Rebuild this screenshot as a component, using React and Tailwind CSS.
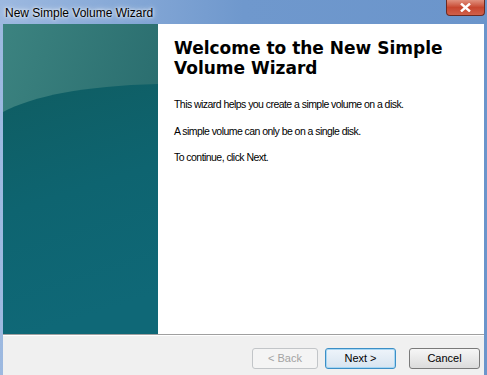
import React from 'react'

function Banner() {
    return (
        <svg width="155" height="310" viewBox="0 0 155 310" className="block">
            <defs>
                <linearGradient id="top" x1="0" y1="0" x2="1" y2="0.6">
                    <stop offset="0" stopColor="#3c8380" />
                    <stop offset="1" stopColor="#276a6c" />
                </linearGradient>
                <linearGradient id="bottom" x1="0" y1="0" x2="0.2" y2="1">
                    <stop offset="0" stopColor="#0f5d62" />
                    <stop offset="0.5" stopColor="#0e6470" />
                    <stop offset="1" stopColor="#0f6877" />
                </linearGradient>
            </defs>
            <rect width="155" height="310" fill="url(#top)" />
            <path d="M0 88 C 30 72, 80 62, 155 60 L155 310 L0 310 Z" fill="url(#bottom)" />
        </svg>
    )
}

function Button({ children, variant, className = 'w-[71px]' }) {
    const styles = {
        disabled: 'border-[#c2c5c8] text-[#a3a3a3] bg-[#f4f4f4]',
        focus: 'border-[#3c8fc6] text-black bg-gradient-to-b from-[#eef4fa] to-[#d7e4f0] shadow-[inset_0_0_0_1px_#a6d6f3]',
        normal: 'border-[#7a7a7a] text-black bg-gradient-to-b from-[#f6f6f6] to-[#dcdcdc]',
    }
    return (
        <button className={`h-[21px] rounded-[3px] border text-[11px] leading-none ${styles[variant]} ${className}`}>
            {children}
        </button>
    )
}

export default function App() {
    return (
        <div
            className="w-[487px] h-[375px] overflow-hidden flex flex-col bg-gradient-to-r from-[#9db9e0] via-[#6f98cd] to-[#6b95cb]"
            style={{ fontFamily: '"Liberation Sans", Arial, sans-serif' }}
        >
            {/* title bar */}
            <div className="h-[24px] flex items-center justify-between pl-[5px] shrink-0">
                <span className="text-[12px] text-black pt-[1px] [text-shadow:0_0_6px_#ffffff,0_0_3px_#ffffff]">
                    New Simple Volume Wizard
                </span>
                <div className="self-start mr-[2px] w-[39px] h-[16px] rounded-b-[4px] border border-t-0 border-[#6b2a22] bg-gradient-to-b from-[#e0907e] via-[#c7462f] to-[#d0604a] flex items-center justify-center">
                    <svg width="11" height="9" viewBox="0 0 11 9">
                        <path d="M1 0.5 L10 8.5 M10 0.5 L1 8.5" stroke="#ffffff" strokeWidth="2.4" />
                    </svg>
                </div>
            </div>

            <div className="flex-1 flex flex-col mx-[3px] bg-white">
                <div className="h-[310px] flex shrink-0">
                    <div className="w-[155px] shrink-0">
                        <Banner />
                    </div>
                    <div className="flex-1 pl-[16px] pt-[14px] text-black">
                        <h1
                            className="text-[17px] font-bold leading-[20px]"
                            style={{ fontFamily: '"DejaVu Sans", Verdana, sans-serif' }}
                        >
                            Welcome to the New Simple<br />Volume Wizard
                        </h1>
                        <p className="mt-[20px] text-[10.5px] leading-[13px] tracking-[-0.55px]">
                            This wizard helps you create a simple volume on a disk.
                        </p>
                        <p className="mt-[14px] text-[10.5px] leading-[13px] tracking-[-0.55px]">
                            A simple volume can only be on a single disk.
                        </p>
                        <p className="mt-[13px] text-[10.5px] leading-[13px] tracking-[-0.55px]">
                            To continue, click Next.
                        </p>
                    </div>
                </div>

                <div className="flex-1 bg-[#f0f0f0] border-t border-[#a0a0a0] shadow-[inset_0_1px_0_#ffffff] flex items-start justify-end pt-[13px] pr-[4px] gap-[7px]">
                    <Button variant="disabled" className="w-[66px]">&lt; Back</Button>
                    <Button variant="focus">Next &gt;</Button>
                    <Button variant="normal" className="w-[71px] ml-[6px]">Cancel</Button>
                </div>
            </div>
        </div>
    )
}
